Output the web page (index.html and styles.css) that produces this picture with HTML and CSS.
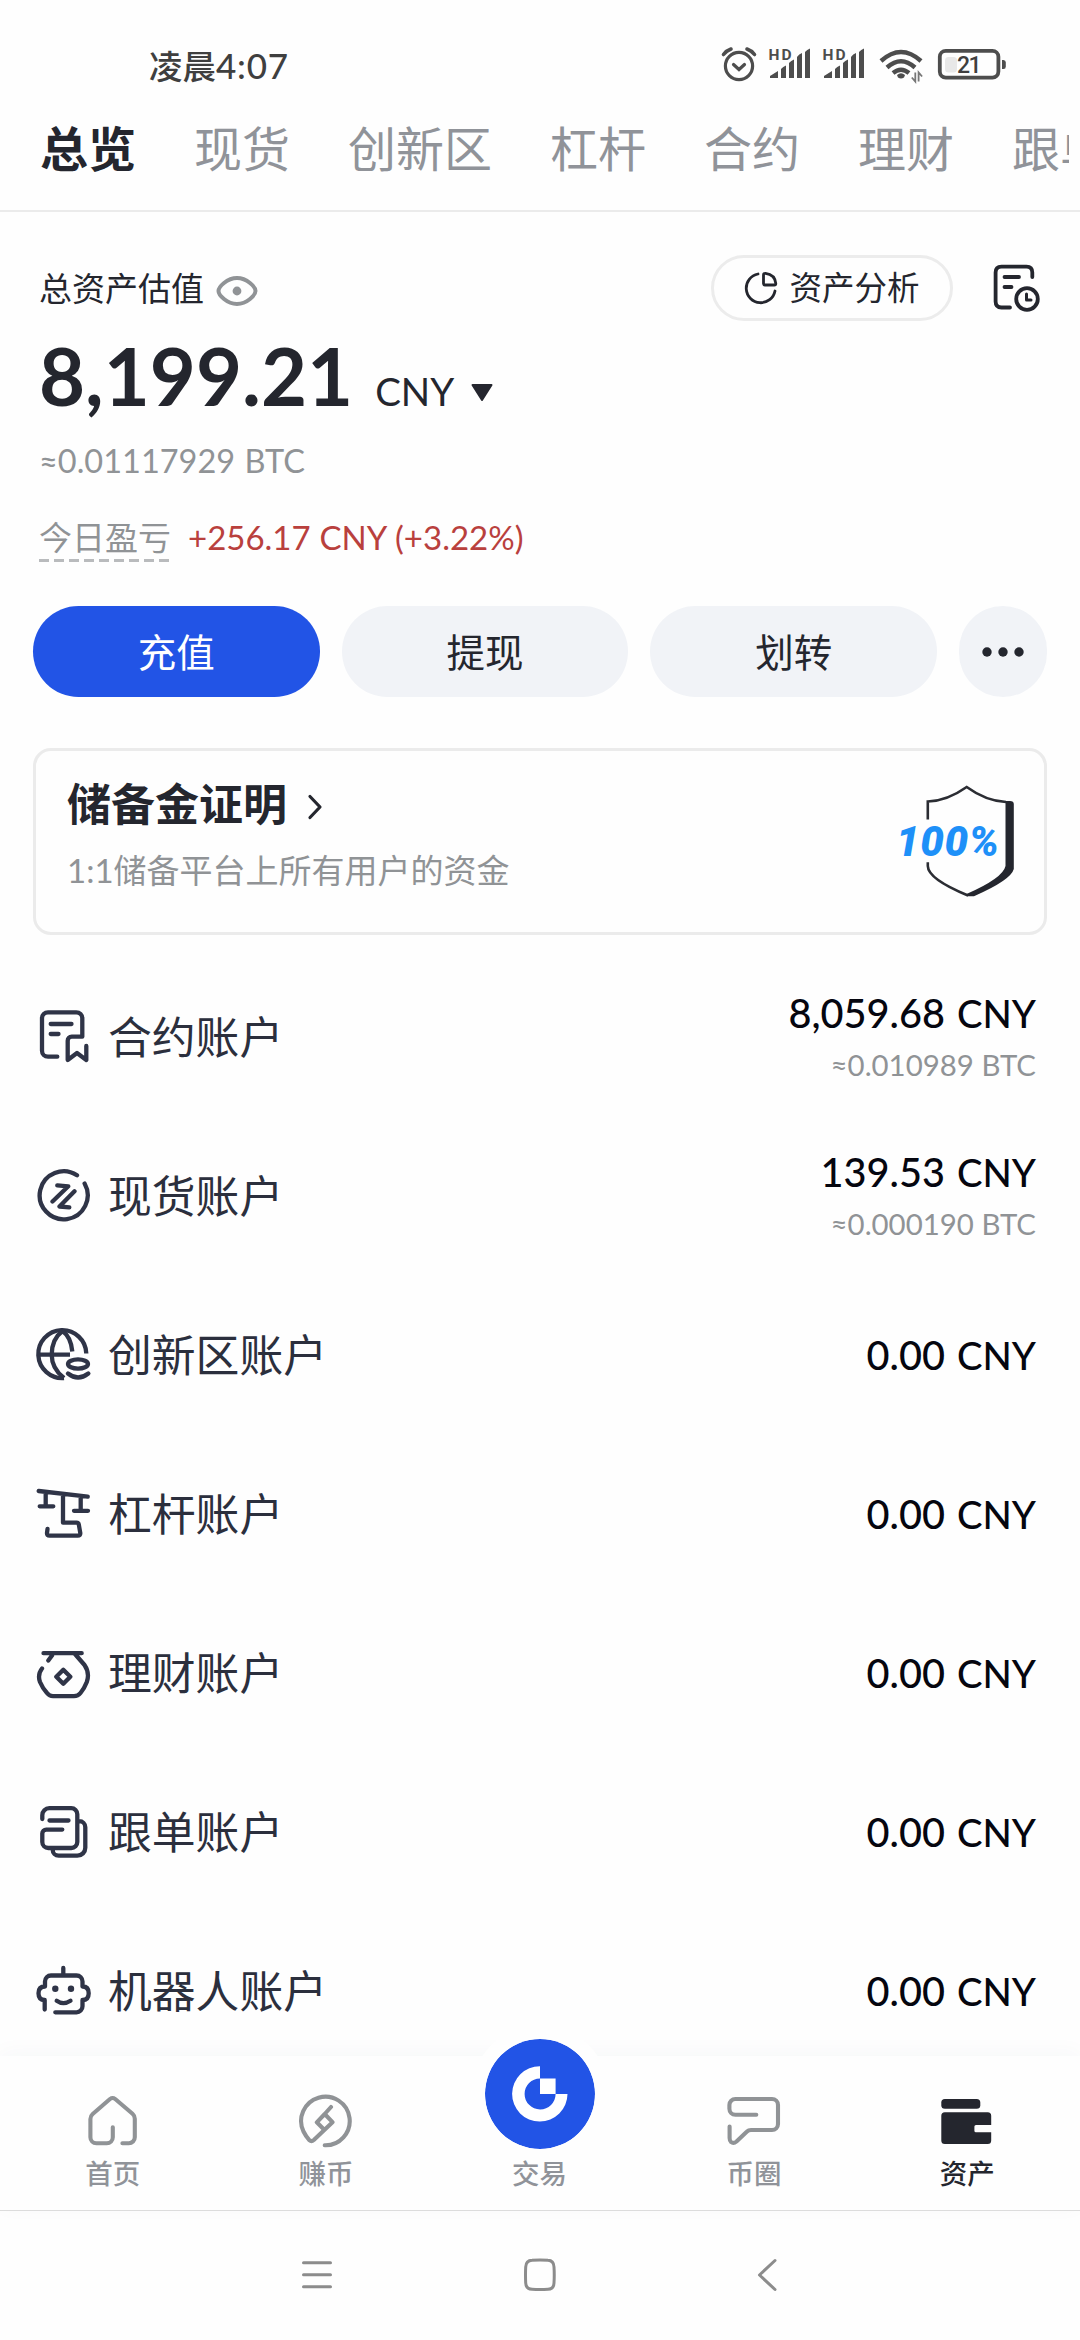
FILE: index.html
```html
<!DOCTYPE html>
<html lang="zh-CN">
<head>
<meta charset="utf-8">
<title>资产总览</title>
<link rel="stylesheet" href="styles.css">
</head>
<body>
<header class="status">
  <span class="status-time">凌晨<span class="status-clock">4:07</span></span>
  <svg class="status-icons" width="290" height="40" viewBox="720 45 290 40">
    <g fill="none" stroke="#4d4d4d" stroke-width="3.2" stroke-linecap="round">
      <circle cx="739" cy="66" r="13.6"/>
      <path d="M733.500 64.500l5.500 5 5.500-5"/>
      <path d="M723.500 54.500q3-4 7.500-5.500M754.500 54.500q-3-4-7.500-5.500" stroke-width="3.600"/>
    </g>
    <g id="signal" fill="#4d4d4d">
      <path d="M770 78v-2q4-2.500 8-5v7zM781 69q2-2.500 5-3.500v12.500h-5zM789 63q2-2.500 5-3.500v18.500h-5zM797 57q2-3 5-4v25h-5zM805 52q2-2.500 5-3.500v29.500h-5z"/>
      <text class="hd" x="768.500" y="59.500" textLength="23">HD</text>
    </g>
    <use href="#signal" x="54"/>
    <g fill="none" stroke="#4d4d4d" stroke-width="4.400">
      <path d="M881 61q20-18 40 0M887 67.500q14-12.500 28 0M893 73q8-6.500 16 0"/>
    </g>
    <path d="M897 75q4-3.500 8 0l-1 2.500q-3 2-6 0z" fill="#4d4d4d"/>
    <path d="M915.300 72.500v9l-3.500-4M918.600 81.500v-9l3.500 4" fill="none" stroke="#777" stroke-width="1.800"/>
    <rect x="939.800" y="50.800" width="58.600" height="26.800" rx="6" fill="none" stroke="#4d4d4d" stroke-width="3.800"/>
    <rect x="945" y="57" width="12" height="15.500" rx="3.500" fill="#e8e8e8"/>
    <path d="M1002 60h1.500q2.300 0 2.300 2.500v4q0 2.500-2.300 2.500h-1.500z" fill="#4d4d4d"/>
    <text class="battery" x="957" y="73.200" textLength="24.500">21</text>
  </svg>
</header>

<nav class="tabs">
  <div class="tab-scroller">
    <span class="tab tab-active">总览</span>
    <span class="tab">现货</span>
    <span class="tab">创新区</span>
    <span class="tab">杠杆</span>
    <span class="tab">合约</span>
    <span class="tab">理财</span>
    <span class="tab">跟单</span>
  </div>
</nav>

<main class="content">
  <section class="overview">
    <div class="overview-top">
      <span class="overview-label">总资产估值</span>
      <svg class="eye" width="42" height="32" viewBox="216 275 42 32">
        <path d="M218.500 291C218.500 287 227 278 237 278S255.500 287 255.500 291 247 304 237 304 218.500 295 218.500 291z" fill="none" stroke="#909396" stroke-width="4"/>
        <circle cx="237" cy="291" r="4.400" fill="#909396"/>
      </svg>
      <button class="analysis">
        <svg width="34" height="34" viewBox="743 270 34 34" fill="none" stroke="#24262e" stroke-width="2.800" stroke-linecap="round" stroke-linejoin="round">
          <path d="M757 273A14.500 14.500 0 1 0 774 290"/>
          <path d="M764.500 272.300Q774 273.500 774.800 282.500 774.800 284 773.300 284H764Q762.500 284 762.500 282.500V274Q762.500 272.200 764.500 272.300z"/>
        </svg>
        资产分析
      </button>
      <svg class="history" width="50" height="50" viewBox="991 262 50 50" fill="none" stroke="#24262e" stroke-width="3.800" stroke-linecap="round" stroke-linejoin="round">
        <path d="M1009 306.500H1000.500Q994.600 306.500 994.600 300.500V271.500Q994.600 265.600 1000.500 265.600H1025.500Q1031.300 265.600 1031.300 271.500V276"/>
        <path d="M1003.500 276H1018M1003.500 286H1010.500"/>
        <circle cx="1026" cy="298" r="10.800"/>
        <path d="M1025.500 293V299H1030" stroke-width="3"/>
      </svg>
    </div>
    <div class="total">
      <span class="total-amount">8,199.21</span>
      <span class="total-unit">CNY</span>
      <svg width="24" height="18" viewBox="0 0 24 18"><path d="M2.500 1H21.500L12 16z" fill="#24262e" stroke="#24262e" stroke-width="2" stroke-linejoin="round"/></svg>
    </div>
    <div class="total-btc">≈0.01117929 BTC</div>
    <div class="pnl">
      <span class="pnl-label">今日盈亏</span>
      <span class="pnl-value">+256.17 CNY (+3.22%)</span>
    </div>
  </section>

  <div class="actions">
    <button class="action action-primary">充值</button>
    <button class="action">提现</button>
    <button class="action">划转</button>
    <button class="action action-more" aria-label="更多">
      <svg width="44" height="12" viewBox="0 0 44 12" fill="#24262e"><circle cx="6" cy="6" r="4.700"/><circle cx="22" cy="6" r="4.700"/><circle cx="38" cy="6" r="4.700"/></svg>
    </button>
  </div>

  <section class="reserve">
    <div>
      <div class="reserve-title">储备金证明
        <svg width="16" height="28" viewBox="0 0 16 28"><path d="M3 3.500L13 14 3 24.500" fill="none" stroke="#24262e" stroke-width="3.200" stroke-linecap="round" stroke-linejoin="round"/></svg>
      </div>
      <div class="reserve-note">1:1储备平台上所有用户的资金</div>
    </div>
    <svg class="shield" width="122" height="116" viewBox="895 783 122 116">
      <path d="M927.800 819.500V801.500Q947 801 966.700 787 986 801 1006 802M927.800 862.300V866Q928 879 968 895.500" fill="none" stroke="#2b2d33" stroke-width="2.600"/>
      <path d="M1005.500 801H1010Q1013.800 801 1013.800 804V869Q1011 880 974 896.200H967L966.500 894Q1003 878 1005.500 866z" fill="#24262e"/>
      <text class="percent" x="896" y="856" textLength="103">100%</text>
    </svg>
  </section>

  <ul class="accounts">
    <li class="account">
      <svg class="account-icon" viewBox="0 0 56 56"><path d="M22.300 47.700H13a6 6 0 0 1-6-6V9.300a6 6 0 0 1 6-6H41.300a6 6 0 0 1 6 6V27.700H36.700a4 4 0 0 0-4 4V51l9.300-7 9.300 7V37M15.700 15H36.500M15.700 25H23.500"/></svg>
      <span class="account-name">合约账户</span>
      <div class="account-values"><span class="cny">8,059.68 <span class="unit">CNY</span></span><span class="btc">≈0.010989 BTC</span></div>
    </li>
    <li class="account">
      <svg class="account-icon" viewBox="0 0 56 56"><path d="M42 7.300A24 24 0 1 0 49.600 15.500M22.300 17.300L33.300 18.300 17.500 33.500M39.500 23.200L24.500 38.500 34.300 39.300"/></svg>
      <span class="account-name">现货账户</span>
      <div class="account-values"><span class="cny">139.53 <span class="unit">CNY</span></span><span class="btc">≈0.000190 BTC</span></div>
    </li>
    <li class="account">
      <svg class="account-icon" viewBox="0 0 56 56"><g stroke-linecap="butt"><path d="M29 51A24 24 0 1 1 51.300 26.500"/><path d="M27.500 4C19.500 10 16.700 19 16.700 27.700S20 44 29 51M27.500 4Q36 10 37.300 24.500M3.300 27.700H35"/></g><ellipse cx="43" cy="37" rx="10" ry="4.600"/><path d="M33 46.500Q43 54.500 53.300 46.500"/></svg>
      <span class="account-name">创新区账户</span>
      <div class="account-values"><span class="cny">0.00 <span class="unit">CNY</span></span></div>
    </li>
    <li class="account">
      <svg class="account-icon" viewBox="0 0 56 56"><path d="M3.700 5L52.700 10.700M10.700 7V20.300M4.700 20.300H18.300M45.700 11V24.800M39 24.800H53M28 8.500V36.700H41.500Q43.500 36.700 43.800 38.500L45.300 47Q45.500 49.700 42.800 49.700H14.500Q11.800 49.700 12 47L12.500 43"/></svg>
      <span class="account-name">杠杆账户</span>
      <div class="account-values"><span class="cny">0.00 <span class="unit">CNY</span></span></div>
    </li>
    <li class="account">
      <svg class="account-icon" viewBox="0 0 56 56"><path d="M8.500 8.200H46.700M17 10.500L13.300 15.500M40 9L49.500 20Q55 28 51.800 37 49.500 43 45.500 48 43 51.200 39 51.200H18Q14.500 51.200 12 48 7.500 43 5 37 2.300 29.500 7 23.500M28.300 24.700L35.300 31.700 28.300 38.700 21.300 31.700z"/></svg>
      <span class="account-name">理财账户</span>
      <div class="account-values"><span class="cny">0.00 <span class="unit">CNY</span></span></div>
    </li>
    <li class="account">
      <svg class="account-icon" viewBox="0 0 56 56"><path d="M7.300 15V11.200a7 7 0 0 1 7-7H36.300a6 6 0 0 1 6 6V38a6 6 0 0 1-6 6H13.300a6 6 0 0 1-6-6V29.600a4 4 0 0 1 4-4H27.300M14.500 16.500H33.500M43 17.200H44.300a6 6 0 0 1 6 6V43.700a8 8 0 0 1-8 8H23.700a6 6 0 0 1-6-6"/></svg>
      <span class="account-name">跟单账户</span>
      <div class="account-values"><span class="cny">0.00 <span class="unit">CNY</span></span></div>
    </li>
    <li class="account">
      <svg class="account-icon" viewBox="0 0 56 56"><path d="M20.300 49.300H41.500a6 6 0 0 0 6-6V37c4 0 6.200-2 6.200-6.800S51.500 23.500 47.500 23.500V18.500a6 6 0 0 0-6-6H16a6 6 0 0 0-6 6V23.500c-4 0-6.500 2-6.500 6.700S6 37 9.700 37V46.500M28.300 5V12M21.700 37.800Q28.300 42.500 35.500 37.800"/><g class="dot"><circle cx="20.300" cy="25.800" r="3.200"/><circle cx="36" cy="25.800" r="3.200"/></g></svg>
      <span class="account-name">机器人账户</span>
      <div class="account-values"><span class="cny">0.00 <span class="unit">CNY</span></span></div>
    </li>
  </ul>
</main>

<nav class="bottom-nav">
  <div class="nav-item">
    <svg class="nav-icon" viewBox="0 0 56 56"><path d="M27.800 34.300V44.300a6 6 0 0 1-6 6H11.400a6 6 0 0 1-6-6V26q0-3 2.300-5L25 6q2.600-2 5.200 0L47.500 20.800q2.300 2 2.300 5V44.300a6 6 0 0 1-6 6H37.400"/></svg>
    <span>首页</span>
  </div>
  <div class="nav-item">
    <svg class="nav-icon" viewBox="0 0 56 56"><path d="M26.700 52.300A24.300 24.300 0 1 0 5.500 38.500Q8 43.500 11.300 47.200 13.500 49 15.800 47L34.500 29.200 26.700 21 18.800 29.300 26 36.500M26.700 21L33 14"/></svg>
    <span>赚币</span>
  </div>
  <div class="nav-item nav-trade">
    <svg class="trade-button" viewBox="484 2039 110 110">
      <circle cx="539" cy="2094" r="55" fill="#2254e6"/>
      <path d="M539 2066.200A27.700 27.700 0 1 0 566.500 2094H554.600A15.500 15.500 0 1 1 539 2078.400z" fill="#fff"/>
      <path d="M539 2078.400H554.600V2094H539z" fill="#fff"/>
    </svg>
    <span>交易</span>
  </div>
  <div class="nav-item">
    <svg class="nav-icon" viewBox="0 0 56 56"><path d="M30.300 21.700H9.400a6 6 0 0 1-6-6V12a6 6 0 0 1 6-6H46a6 6 0 0 1 6 6V31a6 6 0 0 1-6 6H25q-2.500 0-4 1.500L10.500 48.500Q7.500 51 5 49 3.600 48 3.600 45V33.500"/></svg>
    <span>币圈</span>
  </div>
  <div class="nav-item nav-active">
    <svg class="nav-icon nav-icon-solid" viewBox="0 0 56 56"><rect x="2.300" y="6" width="39" height="9.800" rx="3.600"/><path d="M5.800 19.300H48.700Q52.200 19.300 52.200 22.800V32H37Q35.400 32 35.400 33.600V37.700Q35.400 39.300 37 39.300H52.200V47.500Q52.200 51 48.700 51H5.800Q2.300 51 2.300 47.500V22.800Q2.300 19.300 5.800 19.300z"/></svg>
    <span>资产</span>
  </div>
</nav>

<footer class="system-nav">
  <svg width="40" height="40" viewBox="297 2255 40 40"><path d="M303.500 2262.800H330.500M303.500 2274.800H330.500M303.500 2286.800H330.500"/></svg>
  <svg width="40" height="40" viewBox="520 2255 40 40"><path d="M532 2260.300Q540 2259.800 548 2260.300 553.800 2260.500 554 2267 554.500 2275 554 2283 553.800 2289 548 2289.300 540 2289.800 532 2289.300 526 2289 525.700 2283 525.300 2275 525.700 2267 526 2260.500 532 2260.300z"/></svg>
  <svg width="40" height="40" viewBox="747 2255 40 40"><path d="M775 2260.500L759.500 2275 775 2289.500"/></svg>
</footer>
</body>
</html>
```
FILE: styles.css
```css
* {
  box-sizing: border-box;
}

body {
  margin: 0;
  width: 1080px;
  height: 2340px;
  display: flex;
  flex-direction: column;
  overflow: hidden;
  background: #fefefe;
  color: #24262e;
  font-family: "Lato", "Noto Sans CJK SC", sans-serif;
}

svg {
  display: block;
  flex: none;
}

button {
  border: 0;
  padding: 0;
  font: inherit;
  color: inherit;
}

.status {
  height: 88px;
  padding: 45px 70px 0 149px;
  display: flex;
  justify-content: space-between;
}

.status-time {
  color: #3f3f3f;
  font-size: 33.5px;
  font-weight: 500;
  line-height: 41px;
}

.status-clock {
  font-size: 35px;
  letter-spacing: 0.8px;
}

.hd {
  fill: #4d4d4d;
  font: 700 15.500px "Roboto", sans-serif;
}

.battery {
  fill: #3f3f3f;
  font: 500 23px "Roboto", sans-serif;
}

.tabs {
  height: 124px;
  padding-right: 11px;
  border-bottom: 2px solid #ebebeb;
}

.tab-scroller {
  height: 122px;
  padding-left: 40px;
  display: flex;
  gap: 58px;
  align-items: center;
  overflow: hidden;
  white-space: nowrap;
}

.tab {
  flex: none;
  font-size: 48px;
  line-height: 60px;
  color: #909399;
}

.tab-active {
  color: #24262e;
  font-weight: 700;
}

.content {
  height: 1844px;
  overflow: hidden;
}

.overview {
  padding: 43px 38px 0 40px;
}

.overview-top {
  height: 66px;
  display: flex;
  align-items: center;
}

.overview-label {
  margin-left: -1px;
  font-size: 33px;
  line-height: 66px;
}

.eye {
  margin: 5px auto 0 12px;
}

.analysis {
  width: 242px;
  height: 66px;
  display: flex;
  align-items: center;
  justify-content: center;
  gap: 11px;
  border: 3px solid #ececec;
  border-radius: 33px;
  background: #fefefe;
  font-size: 32.5px;
  line-height: 60px;
}

.history {
  margin-left: 39px;
}

.total {
  height: 100px;
  margin-top: 5px;
  display: flex;
  align-items: baseline;
  line-height: 100px;
}

.total-amount {
  margin-left: -1px;
  font-size: 79.5px;
  font-weight: 700;
}

.total-unit {
  margin: 0 16px 0 22px;
  font-size: 38.5px;
}

.total svg {
  align-self: flex-start;
  margin-top: 58px;
}

.total-btc {
  margin: 13px 0 0 -1px;
  font-size: 32.5px;
  line-height: 44px;
  word-spacing: 1px;
  color: #909396;
}

.pnl {
  margin: 29px 0 0 -1px;
  display: flex;
  gap: 17px;
  font-size: 33px;
  line-height: 50px;
}

.pnl-label {
  color: #909396;
  background: repeating-linear-gradient(90deg, #b9bbbd 0 10px, transparent 10px 15px) left bottom / 130px 3px no-repeat;
}

.pnl-value {
  color: #b9403d;
  word-spacing: 0.5px;
}

.actions {
  margin: 44px 33px 0;
  display: flex;
  gap: 22px;
}

.action {
  flex: 1;
  height: 91px;
  border-radius: 46px;
  background: #f1f3f7;
  font-size: 38.5px;
  line-height: 93px;
}

.action-primary {
  background: #2254e6;
  color: #fff;
}

.action-more {
  flex: 0 0 88px;
  display: flex;
  align-items: center;
  justify-content: center;
}

.reserve {
  height: 187px;
  margin: 51px 33px 0;
  padding: 25px 28px 0 31px;
  display: flex;
  justify-content: space-between;
  border: 3px solid #ebebeb;
  border-radius: 18px;
}

.reserve-title {
  display: flex;
  align-items: center;
  gap: 20px;
  font-size: 44px;
  font-weight: 700;
  line-height: 56px;
}

.reserve-title svg {
  margin-top: 6px;
}

.reserve-note {
  margin-top: 16px;
  font-size: 33px;
  line-height: 44px;
  color: #909396;
}

.shield {
  margin: 7px -1px 0 0;
  overflow: visible;
}

.percent {
  fill: #1e90f8;
  font: italic 900 42px "Roboto", sans-serif;
}

.accounts {
  margin: 22px 0 0;
  padding: 0 44px 0 35px;
  list-style: none;
}

.account {
  height: 159px;
  display: flex;
  align-items: center;
}

.account-icon {
  width: 56px;
  height: 56px;
  fill: none;
  stroke: #2f3447;
  stroke-width: 4.3;
  stroke-linecap: round;
  stroke-linejoin: round;
}

.dot {
  fill: #2f3447;
  stroke: none;
}

.account-name {
  margin: 0 auto 0 17px;
  font-size: 43.8px;
  line-height: 56px;
  color: #2b2f3d;
}

.account-values {
  display: flex;
  flex-direction: column;
  align-items: flex-end;
  gap: 3px;
}

.cny {
  font-size: 39.7px;
  font-weight: 500;
  line-height: 54px;
  color: #05060f;
}

.unit {
  margin-left: 2px;
  font-size: 38.3px;
}

.btc {
  font-size: 29.4px;
  line-height: 44px;
  color: #909396;
}

.bottom-nav {
  position: relative;
  height: 155px;
  padding: 0 6px;
  display: flex;
  border-bottom: 1px solid #dcdcdc;
  background: #fefefe;
  box-shadow: 0 -4px 20px rgba(40, 60, 90, 0.03);
}

.nav-item {
  flex: 1;
  padding-top: 37px;
  display: flex;
  flex-direction: column;
  align-items: center;
  gap: 7px;
  font-size: 27.5px;
  font-weight: 500;
  line-height: 36px;
  color: #909399;
}

.nav-icon {
  width: 56px;
  height: 56px;
  fill: none;
  stroke: #909396;
  stroke-width: 4.1;
  stroke-linecap: round;
  stroke-linejoin: round;
}

.nav-trade {
  margin-top: -17px;
  padding: 0 1px 0 0;
}

.trade-button {
  width: 110px;
  height: 110px;
  border-radius: 50%;
  box-shadow: 0 0 0 14px #fefefe;
}

.nav-active {
  color: #24262e;
}

.nav-icon-solid {
  fill: #24262e;
  stroke: none;
}

.system-nav {
  flex: 1;
  padding: 44px 0 0 297px;
  display: grid;
  grid-template-columns: 223px 227px 40px;
  align-content: start;
}

.system-nav svg {
  fill: none;
  stroke: #8c8c8c;
  stroke-width: 3;
  stroke-linecap: round;
  stroke-linejoin: round;
}
```
